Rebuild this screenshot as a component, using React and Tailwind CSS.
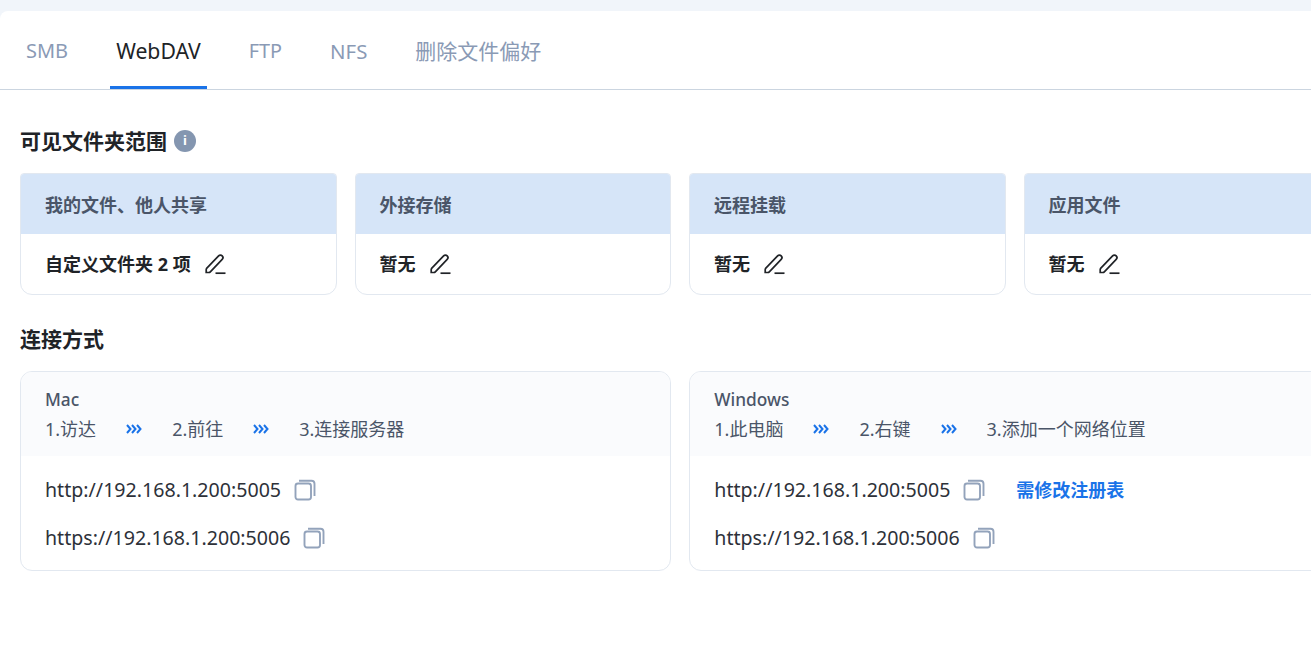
import React from "react";

const FONT = "font-['Noto_Sans','Noto_Sans_CJK_SC',sans-serif]";

const tabs = [
  { label: "SMB", size: "text-[20px]" },
  { label: "WebDAV", size: "text-[21.2px]" },
  { label: "FTP", size: "text-[19.8px]" },
  { label: "NFS", size: "text-[20.4px]" },
  { label: "删除文件偏好", size: "text-[21px]" },
];

const scopes = [
  { title: "我的文件、他人共享", value: "自定义文件夹 2 项" },
  { title: "外接存储", value: "暂无" },
  { title: "远程挂载", value: "暂无" },
  { title: "应用文件", value: "暂无" },
];

const PencilIcon = () => (
  <svg width="22" height="22" viewBox="0 0 22 22" fill="none" stroke="#202327" strokeWidth="1.7" className="shrink-0">
    <path d="M2.6 15.4 14.6 2.9a2.5 2.5 0 0 1 3.6 0 2.5 2.5 0 0 1 0 3.5L6.3 18.9a2 2 0 0 1-1.4.6H2.2v-2.7c0-.5.1-1 .4-1.4Z" />
    <path d="M11.5 20.2h10" />
  </svg>
);

const CopyIcon = () => (
  <svg width="22" height="22" viewBox="0 0 22 22" fill="none" stroke="#93a3bb" strokeWidth="1.9" className="shrink-0">
    <rect x="1.5" y="4.5" width="15.5" height="16" rx="2.5" />
    <path d="M5 1.8h12.5a3 3 0 0 1 3 3V17" />
  </svg>
);

const Arrows = () => (
  <svg width="16" height="12" viewBox="0 0 16 12" fill="none" stroke="#1a73e8" strokeWidth="2" className="shrink-0">
    <path d="M1 2 4.5 6 1 10M6 2 9.5 6 6 10M11 2 14.5 6 11 10" />
  </svg>
);

const Steps = ({ steps }) => (
  <div className="flex items-center h-[26px] mt-[3px] text-[18px] text-[#4a5568]">
    {steps.map((s, i) => (
      <React.Fragment key={s}>
        {i > 0 && (
          <span className="mx-[30px]">
            <Arrows />
          </span>
        )}
        <span>{s}</span>
      </React.Fragment>
    ))}
  </div>
);

const UrlRow = ({ url, children }) => (
  <div className="flex items-center h-[48px] text-[19.6px] text-[#2d3139]">
    <span>{url}</span>
    <span className="ml-[13px]">
      <CopyIcon />
    </span>
    {children}
  </div>
);

const ConnectCard = ({ name, steps, note }) => (
  <div className="w-[651.3px] shrink-0 h-[200px] border border-[#e2e8f0] rounded-[12px] overflow-hidden">
    <div className="h-[84px] bg-[#fafbfd] pl-6 pt-[15px]">
      <div className="h-[26px] text-[17.3px] font-medium leading-[26px] text-[#4a5568]">{name}</div>
      <Steps steps={steps} />
    </div>
    <div className="pl-6 pt-[10px]">
      <UrlRow url="http://192.168.1.200:5005">
        {note && <span className="ml-[31px] text-[18px] font-bold text-[#1a73e8]">{note}</span>}
      </UrlRow>
      <UrlRow url="https://192.168.1.200:5006" />
    </div>
  </div>
);

export default function App() {
  return (
    <div className={`w-[1311px] h-[650px] overflow-hidden bg-[#f1f5fa] pt-[11px] ${FONT}`}>
      <div className="h-[639px] bg-white rounded-tl-[8px]">
        <div className="flex gap-9 h-[79px] pl-5 border-b border-[#cbd5e0]">
          {tabs.map((t) => (
            <div
              key={t.label}
              className={`px-[6px] h-[78px] pt-[25px] leading-[30px] border-b-[3px] ${t.size} ${
                t.label === "WebDAV" ? "text-[#202327] border-[#1a73e8]" : "text-[#8a9ab5] border-transparent"
              }`}
            >
              {t.label}
            </div>
          ))}
        </div>

        <div className="pl-5">
          <div className="flex items-center gap-[7px] h-[28px] mt-[38px] text-[21px] font-bold text-[#202327]">
            <span>可见文件夹范围</span>
            <span className="w-[22px] h-[22px] -mt-[3px] rounded-full bg-[#8496b0] flex items-center justify-center text-white text-[13px] font-bold leading-none">
              i
            </span>
          </div>

          <div className="flex gap-[18px] mt-[17px]">
            {scopes.map((s) => (
              <div key={s.title} className="w-[316.5px] shrink-0 h-[122px] border border-[#e2e8f0] rounded-[12px] rounded-t-[4px] overflow-hidden">
                <div className="h-[61px] -mt-px -mx-px bg-[#d6e5f8] pl-[25px] pt-[3px] flex items-center text-[18px] font-bold text-[#4a5568]">
                  {s.title}
                </div>
                <div className="h-[60px] pl-6 flex items-center gap-[13px] text-[18px] font-bold text-[#202327]">
                  <span>{s.value}</span>
                  <PencilIcon />
                </div>
              </div>
            ))}
          </div>

          <div className="h-[28px] mt-[31px] flex items-center text-[21px] font-bold text-[#202327]">连接方式</div>

          <div className="flex gap-[18px] mt-[17px]">
            <ConnectCard name="Mac" steps={["1.访达", "2.前往", "3.连接服务器"]} />
            <ConnectCard name="Windows" steps={["1.此电脑", "2.右键", "3.添加一个网络位置"]} note="需修改注册表" />
          </div>
        </div>
      </div>
    </div>
  );
}
